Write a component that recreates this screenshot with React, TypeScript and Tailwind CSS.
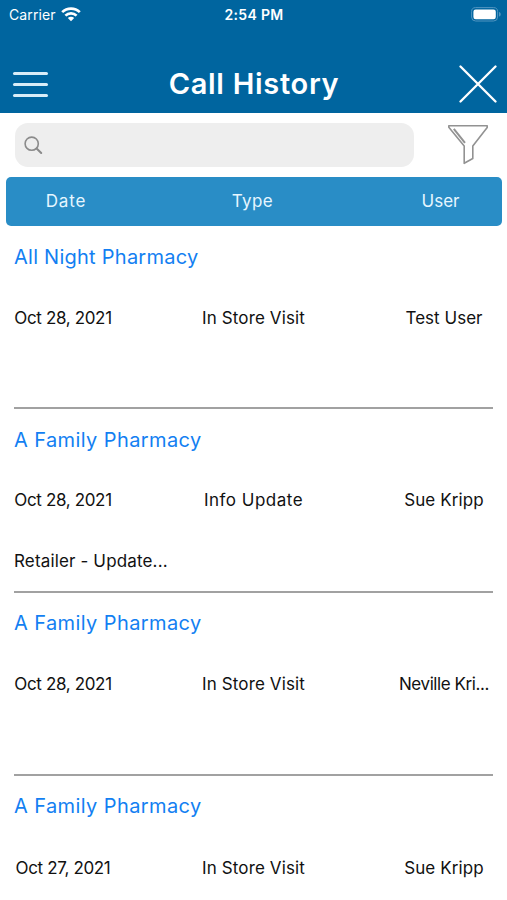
type Call = {
  store: string;
  date: string;
  type: string;
  user: string;
  note?: string;
  storeClass: string;
  typeClass: string;
  userClass: string;
};

const CALLS: Call[] = [
  { store: 'All Night Pharmacy', date: 'Oct 28, 2021', type: 'In Store Visit', user: 'Test User', storeClass: 'tracking-[0.25px]', typeClass: 'tracking-[0.13px]', userClass: 'tracking-[0.02px]' },
  { store: 'A Family Pharmacy', date: 'Oct 28, 2021', type: 'Info Update', user: 'Sue Kripp', note: 'Retailer - Update...', storeClass: 'tracking-[0.4px]', typeClass: 'tracking-[0.5px]', userClass: 'tracking-[0.1px]' },
  { store: 'A Family Pharmacy', date: 'Oct 28, 2021', type: 'In Store Visit', user: 'Neville Kri...', storeClass: 'tracking-[0.4px]', typeClass: 'tracking-[0.13px]', userClass: 'tracking-[-0.42px]' },
  { store: 'A Family Pharmacy', date: 'Oct 27, 2021', type: 'In Store Visit', user: 'Sue Kripp', storeClass: 'tracking-[0.4px]', typeClass: 'tracking-[0.13px]', userClass: 'tracking-[0.1px]' },
];

const WifiIcon = () => (
  <svg width="20" height="15" viewBox="0 0 20 15" fill="none" stroke="white" strokeWidth="2.7">
    <path d="M1.2 5.1 C6 0.5 14 0.5 18.8 5.1" />
    <path d="M4.4 8.6 C7.5 5.6 12.5 5.6 15.6 8.6" />
    <path d="M10 14.2 L6.8 11 C8.7 9.2 11.3 9.2 13.2 11 Z" fill="white" stroke="none" />
  </svg>
);

const BatteryIcon = () => (
  <svg width="31" height="15" viewBox="0 0 31 15">
    <rect x="0.6" y="0.6" width="26" height="13.4" rx="4" fill="none" stroke="#5195c0" strokeWidth="1" />
    <rect x="2.4" y="2.4" width="22.4" height="9.8" rx="2.3" fill="white" />
    <path d="M28 5 C30.3 5.6 30.3 9 28 9.6 Z" fill="#5195c0" />
  </svg>
);

const FunnelIcon = () => (
  <svg width="42" height="42" viewBox="0 0 42 42" fill="none" stroke="#929292" strokeWidth="1.6" strokeLinejoin="round">
    <path d="M1.8 1.8 H40.2 V3.4 L25.8 22 V34.5 L17.2 39.3 V22 L1.8 3.2 Z" />
    <path d="M6.8 4.8 L18 18.8" strokeWidth="2" />
  </svg>
);

const Header = () => (
  <header className="h-[113px] shrink-0 bg-[#00659f] text-white">
    <div className="grid h-7 grid-cols-3 items-center pl-[9px] pr-[5px]">
      <div className="flex items-center gap-[5px] text-[14px] tracking-[0.1px]">
        <span>Carrier</span>
        <WifiIcon />
      </div>
      <span className="pr-[3px] text-center text-[14px] font-semibold tracking-[0.3px] whitespace-nowrap">2:54 PM</span>
      <div className="flex justify-end">
        <BatteryIcon />
      </div>
    </div>
    <div className="grid h-[85px] grid-cols-[1fr_auto_1fr] items-center pt-[27px] pl-[13px] pr-[10px]">
      <button className="flex w-[35px] flex-col gap-2" aria-label="Menu">
        <span className="h-[3px] rounded-full bg-[#d9edf8]" />
        <span className="h-[3px] rounded-full bg-[#d9edf8]" />
        <span className="h-[3px] rounded-full bg-[#d9edf8]" />
      </button>
      <h1 className="mr-[2px] text-[29px] font-semibold tracking-[0.7px]">Call History</h1>
      <button className="justify-self-end" aria-label="Close">
        <svg className="block" width="38" height="38" viewBox="0 0 38 38" stroke="white" strokeWidth="2.3" strokeLinecap="round">
          <path d="M1.5 1.5 L36.5 36.5 M36.5 1.5 L1.5 36.5" />
        </svg>
      </button>
    </div>
  </header>
);

const SearchBar = () => (
  <div className="flex h-16 shrink-0 items-center justify-between pl-[15px] pr-[18px]">
    <div className="flex h-11 w-[399px] items-center rounded-[13px] bg-[#eeeeee] pl-[9px]">
      <svg width="19" height="19" viewBox="0 0 19 19" fill="none" stroke="#8b8b8b" strokeLinecap="round">
        <circle cx="7.7" cy="7.7" r="6.6" strokeWidth="1.6" />
        <path d="M12.6 12.6 L17.2 17" strokeWidth="2.1" />
      </svg>
    </div>
    <FunnelIcon />
  </div>
);

const CallRow = ({ call }: { call: Call }) => (
  <li className="flex h-[183.3px] shrink-0 flex-col border-b-2 border-[#a1a1a1]">
    <a className="flex h-[61px] items-center text-[20px] text-[#137ff2]">
      <span className={call.storeClass}>{call.store}</span>
    </a>
    <div className="grid h-[63px] grid-cols-[98px_1fr_98px] items-center text-center whitespace-nowrap">
      <span className="tracking-[-0.35px]">{call.date}</span>
      <span className={call.typeClass}>{call.type}</span>
      <span className={call.userClass}>{call.user}</span>
    </div>
    {call.note && <p className="flex h-[59px] items-center tracking-[0.15px]">{call.note}</p>}
  </li>
);

export default function App() {
  return (
    <div className="flex h-[900px] w-[507px] flex-col overflow-hidden bg-white font-['Inter','Liberation_Sans',sans-serif] text-[17px] text-[#111111]">
      <Header />
      <SearchBar />
      <div className="mx-[6px] mr-[5px] grid h-[49px] shrink-0 grid-cols-[120px_1fr_123px] items-center rounded-[5px] bg-[#298dc6] pt-px text-center text-[#e6f6ff]">
        <span className="tracking-[0.9px]">Date</span>
        <span className="tracking-[0.4px]">Type</span>
        <span>User</span>
      </div>
      <ul className="flex flex-col px-[14px]">
        {CALLS.map((call, i) => (
          <CallRow key={i} call={call} />
        ))}
      </ul>
    </div>
  );
}
